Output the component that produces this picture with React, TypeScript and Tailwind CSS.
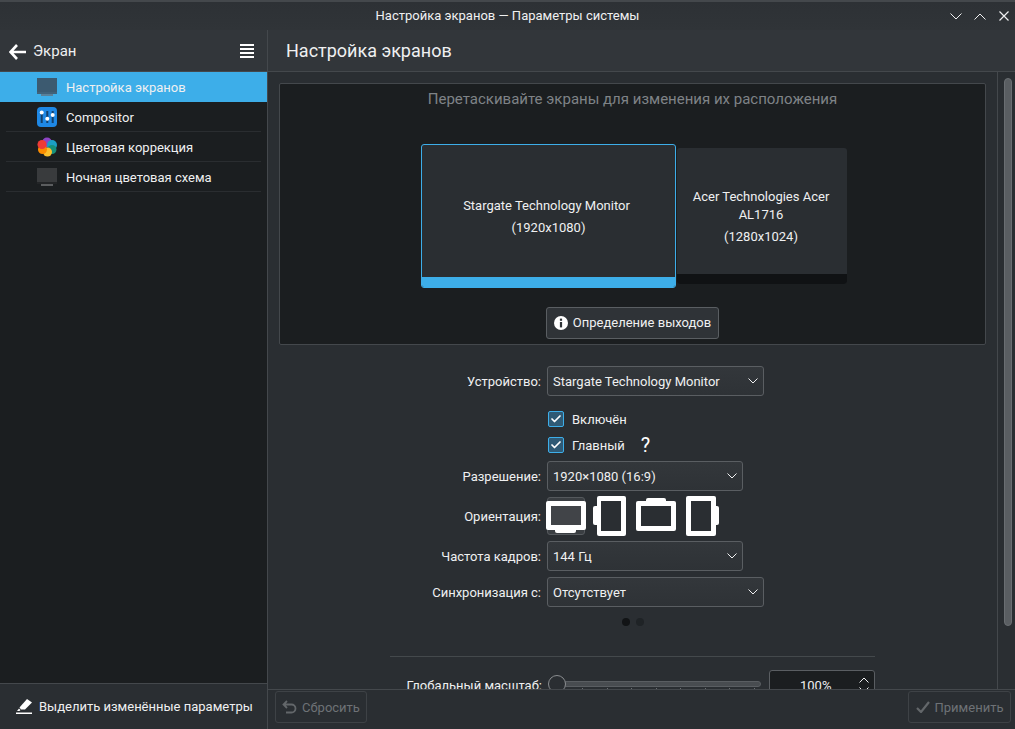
import { Check } from "lucide-react";

const navItems = [
  { label: "Настройка экранов", icon: "display", active: true },
  { label: "Compositor", icon: "compositor" },
  { label: "Цветовая коррекция", icon: "color" },
  { label: "Ночная цветовая схема", icon: "night" },
];

function MonitorIcon({ night }: { night?: boolean }) {
  return (
    <svg width="20" height="20" viewBox="0 0 20 20">
      <rect x="0" y="1" width="20" height="14" fill={night ? "#393b3d" : "#3c5a70"} />
      <rect x="0" y="15" width="20" height="2" fill={night ? "#232527" : "#41627a"} />
      <rect x="4" y="17" width="12" height="2" fill={night ? "#5b5d5f" : "#5a8098"} />
    </svg>
  );
}

function CompositorIcon() {
  return (
    <svg width="20" height="20" viewBox="0 0 20 20">
      <rect width="20" height="20" rx="4" fill="#1e88e5" />
      <path d="M4.7 4v12M10.3 4v12M15.7 4v12" stroke="#123f6b" strokeWidth="2" />
      <circle cx="4.7" cy="5.5" r="2" fill="#fff" />
      <circle cx="10.3" cy="11.7" r="2" fill="#fff" />
      <circle cx="15.7" cy="8" r="2" fill="#fff" />
    </svg>
  );
}

function ColorIcon() {
  return (
    <svg width="20" height="20" viewBox="0 0 20 20">
      <circle cx="10" cy="5.5" r="5" fill="#8e44c4" />
      <circle cx="15" cy="8" r="5" fill="#1b9fc4" />
      <circle cx="15" cy="12.5" r="4.5" fill="#17907a" />
      <circle cx="10.5" cy="15" r="4.5" fill="#fbc02d" />
      <circle cx="5.5" cy="12.5" r="4.5" fill="#fb8c00" />
      <circle cx="5" cy="7.5" r="4.5" fill="#ef3b36" />
    </svg>
  );
}

function Chevron({ up, small }: { up?: boolean; small?: boolean }) {
  if (small) {
    return (
      <svg width="10" height="6" viewBox="0 0 10 6" fill="none" stroke="#eff0f1" strokeWidth="1">
        <path d={up ? "M.5 5.5 5 1l4.5 4.5" : "M.5.5 5 5 9.5.5"} />
      </svg>
    );
  }
  return (
    <svg width="12" height="7" viewBox="0 0 12 7" fill="none" stroke="#eff0f1" strokeWidth="1">
      <path d={up ? "M.5 6.5 6 1l5.5 5.5" : "M.5.5 6 6 11.5.5"} />
    </svg>
  );
}

function Select({ value, width }: { value: string; width: string }) {
  return (
    <div className={`flex h-[30px] items-center justify-between rounded-[3px] border border-[#5a5e62] bg-gradient-to-b from-[#33373b] to-[#2e3236] pl-[5px] pr-[5px] ${width}`}>
      <span className="pt-[2px] text-[13px] text-[#eff0f1]">{value}</span>
      <Chevron small />
    </div>
  );
}

function Checkbox({ label, help }: { label: string; help?: boolean }) {
  return (
    <div className="flex h-[26px] items-center">
      <div className="ml-px flex h-4 w-4 items-center justify-center rounded-[2px] border border-[#3daee9] bg-[#2f5a75]">
        <Check size={12} strokeWidth={3.5} color="#fff" />
      </div>
      <span className="ml-2 pt-[2px] text-[13px] text-[#eff0f1]">{label}</span>
      {help && <span className="ml-[16px] text-[20px] leading-none text-white">?</span>}
    </div>
  );
}

function Orientation() {
  return (
    <div className="flex h-[38px] items-start">
      <div className="flex h-[38px] w-[38px] items-center justify-center rounded-[3px] border border-[#55595d] bg-[#3a3e42]">
        <svg width="40" height="38" viewBox="0 0 40 38" className="shrink-0">
          <rect x="9" y="30" width="21" height="6" rx="2" fill="#fff" />
          <rect x="0" y="4" width="40" height="29" rx="2" fill="#fff" />
          <rect x="5" y="9" width="30" height="19" fill="#414448" />
        </svg>
      </div>
      <svg width="33" height="40" viewBox="0 0 33 40" className="ml-[8px] mt-[-1px]">
        <rect x="0" y="10" width="8" height="19" rx="2" fill="#fff" />
        <rect x="4" y="0" width="29" height="40" rx="2" fill="#fff" />
        <rect x="8" y="5" width="20" height="30" fill="#2a2e32" />
      </svg>
      <svg width="40" height="35" viewBox="0 0 40 35" className="ml-[10px]">
        <rect x="10" y="1" width="20" height="8" rx="2" fill="#fff" />
        <rect x="0" y="4" width="40" height="30" rx="2" fill="#fff" />
        <rect x="5" y="9" width="30" height="20" fill="#2a2e32" />
      </svg>
      <svg width="33" height="40" viewBox="0 0 33 40" className="ml-[10px] mt-[-1px]">
        <rect x="25" y="10" width="8" height="19" rx="2" fill="#fff" />
        <rect x="0" y="0" width="30" height="40" rx="2" fill="#fff" />
        <rect x="5" y="5" width="20" height="30" fill="#2a2e32" />
      </svg>
    </div>
  );
}

export default function App() {
  return (
    <div className="flex h-[729px] w-[1015px] flex-col overflow-hidden bg-[#2a2e32] text-[13px] text-[#eff0f1]" style={{ fontFamily: "Roboto, 'Noto Sans', sans-serif" }}>
      {/* titlebar */}
      <div className="relative flex h-[30px] shrink-0 items-center justify-center border-t-2 border-[#44484c] bg-gradient-to-b from-[#2d3135] to-[#303438]">
        <span className="mt-[-1px] text-[13px]">Настройка экранов — Параметры системы</span>
        <div className="absolute right-[5px] top-[8px] flex items-center gap-[12px]">
          <Chevron />
          <Chevron up />
          <svg width="12" height="12" viewBox="0 0 12 12" stroke="#eff0f1" strokeWidth="1.2"><path d="M1.5 1.5l9 9M10.5 1.5l-9 9" /></svg>
        </div>
      </div>

      <div className="flex min-h-0 flex-1">
        {/* sidebar */}
        <div className="flex w-[268px] shrink-0 flex-col border-r border-[#44484c]">
          <div className="flex h-[42px] shrink-0 items-center border-b border-[#44484c] bg-[#32363a] pl-[9px] pr-[13px]">
            <svg width="17" height="16" viewBox="0 0 17 16" fill="none" stroke="#fff" strokeWidth="2.6" className="mt-[2px]">
              <path d="M8 1 1.5 8 8 15M2 8h15" />
            </svg>
            <span className="ml-[7px] flex-1 pt-[2px] text-[15px]">Экран</span>
            <div className="flex w-[14px] flex-col gap-[2px]">
              <div className="h-[2px] bg-white" />
              <div className="h-[2px] bg-white" />
              <div className="h-[2px] bg-white" />
              <div className="h-[2px] bg-white" />
            </div>
          </div>
          <div className="min-h-0 flex-1 bg-[#1b1e20]">
            {navItems.map((item) => (
              <div key={item.label} className={item.active ? "h-[30px] bg-[#3daee9]" : "mx-[6px] h-[30px] border-b border-[#2a2d30]"}>
                <div className={`flex h-[30px] items-center ${item.active ? "pl-[37px]" : "pl-[31px]"}`}>
                  {item.icon === "display" && <MonitorIcon />}
                  {item.icon === "compositor" && <CompositorIcon />}
                  {item.icon === "color" && <ColorIcon />}
                  {item.icon === "night" && <MonitorIcon night />}
                  <span className="ml-[9px] pt-[2px] text-[13px]">{item.label}</span>
                </div>
              </div>
            ))}
          </div>
          <div className="flex h-[46px] shrink-0 items-center border-t border-[#44484c] pl-[16px]">
            <svg width="16" height="15" viewBox="0 0 16 15" fill="#fff">
              <path d="M11 0 16 3.5 9 10.5H5L3.5 8.5z" />
              <path d="M3 9.5 4.5 11 3.5 12H1z" />
              <rect y="13.5" width="16" height="1.5" />
            </svg>
            <span className="ml-[7px]">Выделить изменённые параметры</span>
          </div>
        </div>

        {/* main */}
        <div className="flex min-w-0 flex-1 flex-col">
          <div className="flex h-[42px] shrink-0 items-center border-b border-[#44484c] bg-[#32363a] pl-[18px] text-[18px]">
            Настройка экранов
          </div>
          <div className="flex min-h-0 flex-1 overflow-hidden">
            <div className="min-w-0 flex-1 overflow-hidden pl-[11px] pr-[11px] pt-[11px]">
              <div className="relative h-[262px] w-[707px] rounded-[2px] border border-[#44484c] bg-[#1b1e20]">
                <p className="pt-[4px] text-center text-[15px] text-[#7f8387]">Перетаскивайте экраны для изменения их расположения</p>
                <div className="absolute left-[397px] top-[64px] flex h-[136px] w-[170px] flex-col overflow-hidden rounded-[3px] bg-[#2a2e32]">
                  <div className="flex flex-1 flex-col items-center justify-center pl-2 pr-[10px] pt-[12px] text-center leading-[18px]">
                    <span>Acer Technologies Acer AL1716</span>
                    <span className="mt-[4px]">(1280x1024)</span>
                  </div>
                  <div className="h-[10px] bg-[#101214]" />
                </div>
                <div className="absolute left-[141px] top-[60px] flex h-[144px] w-[255px] flex-col overflow-hidden rounded-[3px] border border-[#3daee9] bg-[#2a2e32]">
                  <div className="flex flex-1 flex-col items-center justify-center pt-[12px] leading-[18px]">
                    <span className="pr-[4px]">Stargate Technology Monitor</span>
                    <span className="mt-[4px]">(1920x1080)</span>
                  </div>
                  <div className="h-[10px] bg-[#3daee9]" />
                </div>
                <div className="absolute left-[266px] top-[223px] flex h-[32px] w-[173px] items-center justify-center gap-[5px] rounded-[3px] border border-[#5a5e62] bg-[#2f3337]">
                  <svg width="14" height="14" viewBox="0 0 14 14">
                    <circle cx="7" cy="7" r="7" fill="#fff" />
                    <rect x="5.9" y="2.6" width="2.2" height="2.2" fill="#2f3337" />
                    <rect x="5.9" y="6" width="2.2" height="5.4" fill="#2f3337" />
                  </svg>
                  <span>Определение выходов</span>
                </div>
              </div>

              <div className="mt-[21px] grid grid-cols-[262px_auto] items-center gap-x-[6px]">
                <span className="pt-[2px] text-right">Устройство:</span>
                <Select value="Stargate Technology Monitor" width="w-[217px]" />
                <span />
                <div className="mt-[10px]">
                  <Checkbox label="Включён" />
                  <Checkbox label="Главный" help />
                </div>
                <span className="mt-[3px] pt-[2px] text-right">Разрешение:</span>
                <div className="mt-[3px]"><Select value="1920×1080 (16:9)" width="w-[196px]" /></div>
                <span className="mt-[6px] pt-[2px] text-right">Ориентация:</span>
                <div className="mt-[6px]"><Orientation /></div>
                <span className="mt-[6px] pt-[2px] text-right">Частота кадров:</span>
                <div className="mt-[6px]"><Select value="144 Гц" width="w-[196px]" /></div>
                <span className="mt-[6px] pt-[2px] text-right">Синхронизация с:</span>
                <div className="mt-[6px]"><Select value="Отсутствует" width="w-[217px]" /></div>
              </div>

              <div className="ml-[343px] mt-[11px] flex gap-[6px]">
                <div className="h-2 w-2 rounded-full bg-[#121416]" />
                <div className="h-2 w-2 rounded-full bg-[#1f2326]" />
              </div>
              <div className="ml-[111px] mt-[30px] h-px w-[485px] bg-[#44494c]" />

              <div className="mt-[13px] grid grid-cols-[263px_auto] items-center gap-x-[5px]">
                <span className="pt-[2px] text-right">Глобальный масштаб:</span>
                <div className="flex items-center">
                  <div className="relative -mt-[2px] h-[18px] w-[214px]">
                    <div className="absolute left-[18px] right-0 top-[6px] h-[6px] rounded-r-full border border-[#5a5e62] bg-[#484c50]" />
                    <div className="absolute left-[1px] top-0 h-[18px] w-[18px] rounded-full border border-[#8a8d90] bg-[#2a2e32]" />
                    {/* tick marks under the groove */}
                    <div className="absolute left-[35px] right-[6px] top-[13px] flex justify-between">
                      {[0, 1, 2, 3, 4, 5, 6, 7].map((t) => (
                        <div key={t} className="h-[1px] w-px bg-[#6a6e72]" />
                      ))}
                    </div>
                  </div>
                  <div className="relative ml-[8px] h-[30px] w-[106px] rounded-[3px] border border-[#5a5e62] bg-[#1b1e20] pl-[30px] pt-[5px]">
                    100%
                    <div className="absolute right-[5px] top-[6px]"><Chevron up small /></div>
                    <div className="absolute right-[5px] top-[16px]"><Chevron small /></div>
                  </div>
                </div>
              </div>
            </div>
            {/* scrollbar */}
            <div className="w-[18px] shrink-0 border-l border-[#44484c] pl-[6px] pt-[6px]">
              <div className="h-[548px] w-[8px] rounded-full border border-[#6a6e72] bg-[#5a5e62]" />
            </div>
          </div>
          <div className="flex h-[40px] shrink-0 items-start justify-between border-t border-[#44484c] bg-[#2a2e32] pl-[7px] pr-[4px] pt-px">
            <div className="flex h-[32px] w-[92px] items-center justify-center gap-[5px] rounded-[3px] border border-[#3e4246] text-[#6e7276]">
              <svg width="15" height="14" viewBox="0 0 15 14" fill="none" stroke="#63676a" strokeWidth="1.8">
                <path d="M5 1 1.5 4.5 5 8M2 4.5h7.5a4 4 0 0 1 0 8H4" />
              </svg>
              <span className="pt-[2px]">Сбросить</span>
            </div>
            <div className="flex h-[32px] w-[103px] items-center justify-center gap-[5px] rounded-[3px] border border-[#3e4246] text-[#6e7276]">
              <svg width="14" height="12" viewBox="0 0 14 12" fill="none" stroke="#63676a" strokeWidth="2.2">
                <path d="M1 7l4 4L13 1" />
              </svg>
              <span className="pt-[2px]">Применить</span>
            </div>
          </div>
        </div>
      </div>
    </div>
  );
}
